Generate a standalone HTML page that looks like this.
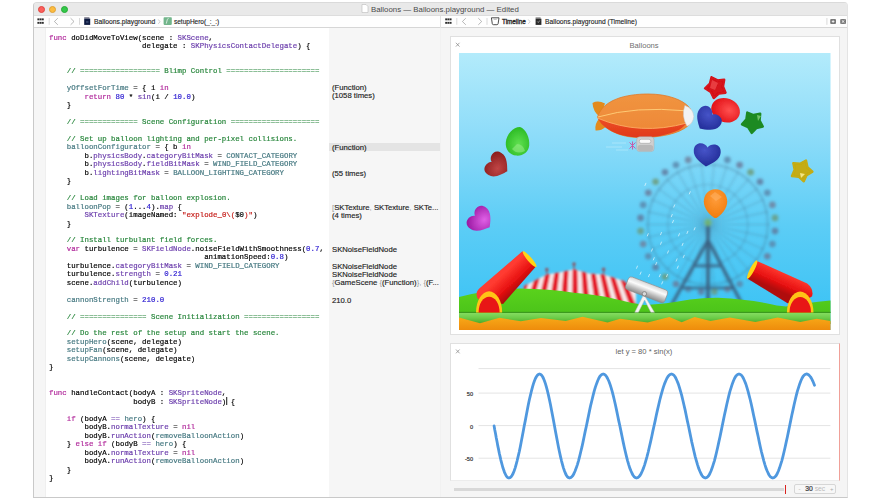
<!DOCTYPE html>
<html><head><meta charset="utf-8">
<style>
*{margin:0;padding:0;box-sizing:border-box}
html,body{width:880px;height:500px;overflow:hidden;background:#fff;font-family:"Liberation Sans",sans-serif;position:relative}
.a{position:absolute}
#win{position:absolute;left:33px;top:2px;width:815px;height:496px;border:1px solid #c9c9c9;border-right-color:#e4e4e4;border-top-color:#dadada;border-radius:4px 4px 0 0;background:#f1f1f1}
#title{position:absolute;left:34px;top:3px;width:813px;height:13px;background:#e9e9e9;border-bottom:1px solid #dddddd;border-radius:3px 3px 0 0}
#tool{position:absolute;left:34px;top:16px;width:813px;height:12px;background:#fefefe;border-bottom:1px solid #d6d6d6}
.light{position:absolute;top:5.6px;width:7.2px;height:7.2px;border-radius:50%}
#editor{position:absolute;left:34px;top:28px;width:406px;height:469px;background:#fff}
#gutter{position:absolute;left:34px;top:28px;width:12px;height:469px;background:#f6f6f6;border-right:1px solid #efefef}
#results{position:absolute;left:329px;top:28px;width:111px;height:469px;background:#f6f6f6}
#divider{position:absolute;left:440.5px;top:28px;width:1.2px;height:469px;background:#dcdcdc}
#right{position:absolute;left:441px;top:28px;width:406px;height:469px;background:#f5f5f5}
#code{position:absolute;left:49.3px;top:33.6px;font-family:"Liberation Mono",monospace;font-size:8px;line-height:8.45px;white-space:pre;color:#000;transform:scaleX(0.9233);transform-origin:0 0;-webkit-text-stroke:0.2px}
#code b{font-weight:normal}
.k{color:#b0289a}.t{color:#6a3cab}.p{color:#457880}.c{color:#26853a}.n{color:#2a1ad0}.s{color:#c41a16}
.cur{display:inline-block;width:1px;height:8px;background:#000;vertical-align:-1px;margin-right:-1px}
.res{position:absolute;left:332px;font-size:7.7px;color:#222;white-space:pre;line-height:8px;-webkit-text-stroke:0.15px #222}
.res i{-webkit-text-stroke:0}
.res i{font-style:normal;color:#999}
.panel{position:absolute;background:#fff;border:1px solid #e0e0e0}
.tb{position:absolute;font-size:6.7px;color:#222;white-space:pre;line-height:8px;-webkit-text-stroke:0.12px #222}
</style></head><body>
<div id="win"></div>
<div id="title">
  <div class="light" style="left:3.8px;top:2.6px;background:#fc605c;border:0.5px solid #e0443e"></div>
  <div class="light" style="left:15px;top:2.6px;background:#fdbc40;border:0.5px solid #dea236"></div>
  <div class="light" style="left:26.6px;top:2.6px;background:#34c84a;border:0.5px solid #27aa35"></div>
</div>
<svg class="a" style="left:361px;top:4px" width="8" height="9"><path d="M1 .5h4l2 2v6H1z" fill="#fff" stroke="#bbb" stroke-width=".6"/></svg>
<div class="a" style="left:371px;top:4.5px;font-size:7.85px;color:#4a4a4a;white-space:pre;line-height:9px">Balloons — Balloons.playground — Edited</div>
<div id="tool"></div>
<svg class="a" style="left:34px;top:16px" width="813" height="12" viewBox="34 16 813 12">
  <g fill="#2e2e2e"><rect x="37.4" y="18.4" width="1.95" height="1.9"/><rect x="39.6" y="18.4" width="1.95" height="1.9"/><rect x="41.8" y="18.4" width="1.95" height="1.9"/><rect x="37.4" y="21.9" width="1.95" height="1.9"/><rect x="39.6" y="21.9" width="1.95" height="1.9"/><rect x="41.8" y="21.9" width="1.95" height="1.9"/><rect x="445.2" y="18.4" width="1.95" height="1.9"/><rect x="447.4" y="18.4" width="1.95" height="1.9"/><rect x="449.6" y="18.4" width="1.95" height="1.9"/><rect x="445.2" y="21.9" width="1.95" height="1.9"/><rect x="447.4" y="21.9" width="1.95" height="1.9"/><rect x="449.6" y="21.9" width="1.95" height="1.9"/></g>
  <g fill="#d9d9d9">
    <rect x="48.7" y="18" width="1" height="6.8"/><rect x="79" y="18" width="1" height="6.8"/>
    <rect x="456.3" y="18" width="1" height="6.8"/><rect x="486.5" y="18" width="1" height="6.8"/>
    <rect x="826.4" y="18" width="1" height="6.8"/>
  </g>
  <g fill="none" stroke="#9a9a9a" stroke-width=".7">
    <path d="M57.8 18.2 L54.4 21.5 L57.8 24.8"/><path d="M70.6 18.2 L74 21.5 L70.6 24.8"/>
    <path d="M465.8 18.2 L462.4 21.5 L465.8 24.8"/><path d="M478.3 18.2 L481.7 21.5 L478.3 24.8"/>
  </g>
  <g fill="none" stroke="#b0b0b0" stroke-width=".6">
    <path d="M158.3 19.5 L160 21.7 L158.3 23.9"/><path d="M528.3 19.5 L530 21.7 L528.3 23.9"/>
  </g>
  <!-- doc icons -->
  <rect x="84.2" y="17.1" width="5.2" height="1.6" fill="#8a8a9a"/>
  <rect x="84.2" y="18.6" width="6" height="6.3" fill="#0d1a40"/>
  <path d="M86 21.5h2.5M86 22.6h2.5" stroke="#5a6a90" stroke-width=".5"/>
  <rect x="535.6" y="17.3" width="5" height="1.5" fill="#8a8a8a"/>
  <rect x="535.6" y="18.7" width="5.8" height="6.2" fill="#2a2a2a"/>
  <path d="M537.3 21.5l1 1 1.5-2" stroke="#ddd" stroke-width=".6" fill="none"/>
  <!-- green func icon -->
  <rect x="163.6" y="17.2" width="8.2" height="7.7" rx=".8" fill="#72b58b"/>
  <path d="M168.6 18.6 Q167.6 18.4 167.3 19.6 L166.3 23.6" stroke="#fff" stroke-width=".7" fill="none"/>
  <!-- timeline icon -->
  <path d="M491.4 17.8 h7.6 l-0.9 6 q-0.2 .9 -1.2 .9 h-3.4 q-1 0 -1.2 -.9z" fill="#fff" stroke="#3a3a3a" stroke-width=".9"/>
  <path d="M493.6 19.3h3.2" stroke="#777" stroke-width=".5"/>
  <!-- right icons -->
  <rect x="830.2" y="18.9" width="5.8" height="5.2" rx="1" fill="#7a7a7a"/>
  <path d="M831.8 21.5h2.6M833.1 20.2v2.6" stroke="#f4f4f4" stroke-width=".9"/>
  <rect x="840.2" y="18.9" width="5.8" height="5.2" rx="1" fill="#7a7a7a"/>
  <path d="M841.8 20.3l2.6 2.4M844.4 20.3l-2.6 2.4" stroke="#f4f4f4" stroke-width=".9"/>
</svg>
<div class="tb" style="left:94px;top:17.6px;font-size:6.75px">Balloons.playground</div>
<div class="tb" style="left:174px;top:17.6px;font-size:6.5px">setupHero(_:_:)</div>
<div class="tb" style="left:502px;top:17.6px;font-size:6.35px;color:#222;-webkit-text-stroke:0.3px #222">Timeline</div>
<div class="tb" style="left:545px;top:17.6px;font-size:6.7px">Balloons.playground (Timeline)</div>
<div class="a" style="left:440px;top:16px;width:1px;height:12px;background:#e2e2e2"></div>

<div id="editor"></div>
<div id="gutter"></div>
<div id="results"></div>
<div class="a" style="left:329px;top:143px;width:111px;height:8.2px;background:#e4e4e4"></div>
<div class="res" style="top:84.3px">(Function)
(1058 times)</div>
<div class="res" style="top:143.5px">(Function)</div>
<div class="res" style="top:169.5px">(55 times)</div>
<div class="res" style="top:203.5px"><i>[</i>SKTexture<i>,</i> SKTexture<i>,</i> SKTe...
(4 times)</div>
<div class="res" style="top:246px">SKNoiseFieldNode</div>
<div class="res" style="top:263px">SKNoiseFieldNode
SKNoiseFieldNode
<i>{</i>GameScene <i>{</i>(Function)<i>}, {</i>(F...</div>
<div class="res" style="top:296.5px">210.0</div>

<div id="code"><b class="k">func</b> doDidMoveToView(scene : <b class="t">SKScene</b>,
                     delegate : <b class="t">SKPhysicsContactDelegate</b>) {


    <b class="c">// ================== Blimp Control =====================</b>

    <b class="p">yOffsetForTime</b> = { i <b class="k">in</b>
        <b class="k">return</b> <b class="n">80</b> * <b class="t">sin</b>(i / <b class="n">10.0</b>)
    }

    <b class="c">// ============= Scene Configuration ====================</b>

    <b class="c">// Set up balloon lighting and per-pixel collisions.</b>
    <b class="p">balloonConfigurator</b> = { b <b class="k">in</b>
        b.<b class="t">physicsBody</b>.<b class="t">categoryBitMask</b> = <b class="p">CONTACT_CATEGORY</b>
        b.<b class="t">physicsBody</b>.<b class="t">fieldBitMask</b> = <b class="p">WIND_FIELD_CATEGORY</b>
        b.<b class="t">lightingBitMask</b> = <b class="p">BALLOON_LIGHTING_CATEGORY</b>
    }

    <b class="c">// Load images for balloon explosion.</b>
    <b class="p">balloonPop</b> = (<b class="n">1</b>...<b class="n">4</b>).<b class="t">map</b> {
        <b class="t">SKTexture</b>(imageNamed: <b class="s">&quot;explode_0\(</b>$0<b class="s">)&quot;</b>)
    }

    <b class="c">// Install turbulant field forces.</b>
    <b class="k">var</b> turbulence = <b class="t">SKFieldNode</b>.noiseFieldWithSmoothness(<b class="n">0.7</b>,
                                   animationSpeed:<b class="n">0.8</b>)
    turbulence.<b class="t">categoryBitMask</b> = <b class="p">WIND_FIELD_CATEGORY</b>
    turbulence.<b class="t">strength</b> = <b class="n">0.21</b>
    scene.<b class="t">addChild</b>(turbulence)

    <b class="p">cannonStrength</b> = <b class="n">210.0</b>

    <b class="c">// =============== Scene Initialization =================</b>

    <b class="c">// Do the rest of the setup and start the scene.</b>
    <b class="p">setupHero</b>(scene, delegate)
    <b class="p">setupFan</b>(scene, delegate)
    <b class="p">setupCannons</b>(scene, delegate)
}


<b class="k">func</b> handleContact(bodyA : <b class="t">SKSpriteNode</b>,
                   bodyB : <b class="t">SKSpriteNode</b>)<i class="cur"></i> {

    <b class="k">if</b> (bodyA <b class="t">==</b> <b class="p">hero</b>) {
        bodyB.<b class="t">normalTexture</b> = <b class="k">nil</b>
        bodyB.<b class="t">runAction</b>(<b class="p">removeBalloonAction</b>)
    } <b class="k">else</b> <b class="k">if</b> (bodyB <b class="t">==</b> <b class="p">hero</b>) {
        bodyA.<b class="t">normalTexture</b> = <b class="k">nil</b>
        bodyA.<b class="t">runAction</b>(<b class="p">removeBalloonAction</b>)
    }
}</div>
<div id="divider"></div>
<div id="right"></div>
<div class="panel" style="left:449.6px;top:35.8px;width:390px;height:298.8px"></div>
<svg class="a" style="left:453px;top:40px" width="10" height="10" viewBox="453 40 10 10"><path d="M455.9 42.8L459.5 46.6M459.5 42.8L455.9 46.6" stroke="#8a8a8a" stroke-width="0.75"/></svg>
<div class="a" style="left:629.5px;top:41.8px;font-size:7.6px;color:#6f6f6f;line-height:8px">Balloons</div>
<div class="panel" style="left:449.6px;top:342.7px;width:390px;height:138.3px;border-right:1px solid #f0a098;border-bottom-color:#ececec"></div>
<svg class="a" style="left:453px;top:347px" width="10" height="10" viewBox="453 347 10 10"><path d="M456 349.5L459.6 353.3M459.6 349.5L456 353.3" stroke="#8a8a8a" stroke-width="0.75"/></svg>
<div class="a" style="left:615.5px;top:347.8px;font-size:7.6px;color:#636363;line-height:8px;white-space:pre">let y = 80 * sin(x)</div>
<div class="a" style="left:440px;top:389.6px;width:33px;text-align:right;font-size:5.6px;color:#333;line-height:8px;-webkit-text-stroke:0.2px #333">50</div>
<div class="a" style="left:440px;top:422.6px;width:33px;text-align:right;font-size:5.6px;color:#333;line-height:8px;-webkit-text-stroke:0.2px #333">0</div>
<div class="a" style="left:440px;top:455.2px;width:33px;text-align:right;font-size:5.6px;color:#333;line-height:8px;-webkit-text-stroke:0.2px #333">-50</div>
<svg class="a" style="left:450px;top:343px" width="390" height="140" viewBox="450 343 390 140">
<g stroke="#e4e4e4" stroke-width="1"><path d="M478.5 368.6H830.4M478.5 393.1H830.4M478.5 425.6H830.4M478.5 458.2H830.4"/></g>
<path d="M494.1 426.0 L494.8 430.1 L495.6 434.1 L496.3 438.1 L497.1 442.1 L497.8 445.9 L498.6 449.6 L499.3 453.2 L500.1 456.6 L500.8 459.8 L501.6 462.8 L502.3 465.5 L503.0 468.1 L503.8 470.3 L504.5 472.3 L505.3 474.0 L506.0 475.5 L506.8 476.6 L507.5 477.4 L508.3 477.8 L509.0 478.0 L510.0 477.7 L511.0 476.9 L512.0 475.5 L513.1 473.5 L514.1 471.0 L515.1 468.1 L516.1 464.6 L517.1 460.8 L518.1 456.6 L519.2 452.0 L520.2 447.2 L521.2 442.1 L522.2 436.8 L523.2 431.4 L524.2 426.0 L525.3 420.6 L526.3 415.2 L527.3 409.9 L528.3 404.8 L529.3 400.0 L530.4 395.4 L531.4 391.2 L532.4 387.4 L533.4 383.9 L534.4 381.0 L535.4 378.5 L536.5 376.5 L537.5 375.1 L538.5 374.3 L539.5 374.0 L540.5 374.3 L541.5 375.1 L542.5 376.5 L543.5 378.5 L544.5 381.0 L545.5 383.9 L546.5 387.4 L547.5 391.2 L548.5 395.4 L549.5 400.0 L550.5 404.8 L551.5 409.9 L552.5 415.2 L553.5 420.6 L554.5 426.0 L555.5 431.4 L556.5 436.8 L557.5 442.1 L558.5 447.2 L559.5 452.0 L560.5 456.6 L561.5 460.8 L562.5 464.6 L563.5 468.1 L564.5 471.0 L565.5 473.5 L566.5 475.5 L567.5 476.9 L568.5 477.7 L569.5 478.0 L570.6 477.7 L571.7 476.9 L572.9 475.5 L574.0 473.5 L575.1 471.0 L576.2 468.1 L577.4 464.6 L578.5 460.8 L579.6 456.6 L580.7 452.0 L581.9 447.2 L583.0 442.1 L584.1 436.8 L585.2 431.4 L586.4 426.0 L587.5 420.6 L588.6 415.2 L589.7 409.9 L590.8 404.8 L592.0 400.0 L593.1 395.4 L594.2 391.2 L595.3 387.4 L596.5 383.9 L597.6 381.0 L598.7 378.5 L599.8 376.5 L601.0 375.1 L602.1 374.3 L603.2 374.0 L604.3 374.3 L605.4 375.1 L606.5 376.5 L607.6 378.5 L608.8 381.0 L609.9 383.9 L611.0 387.4 L612.1 391.2 L613.2 395.4 L614.3 400.0 L615.4 404.8 L616.5 409.9 L617.6 415.2 L618.7 420.6 L619.9 426.0 L621.0 431.4 L622.1 436.8 L623.2 442.1 L624.3 447.2 L625.4 452.0 L626.5 456.6 L627.6 460.8 L628.7 464.6 L629.8 468.1 L631.0 471.0 L632.1 473.5 L633.2 475.5 L634.3 476.9 L635.4 477.7 L636.5 478.0 L637.7 477.7 L638.8 476.9 L640.0 475.5 L641.2 473.5 L642.3 471.0 L643.5 468.1 L644.7 464.6 L645.8 460.8 L647.0 456.6 L648.2 452.0 L649.3 447.2 L650.5 442.1 L651.7 436.8 L652.8 431.4 L654.0 426.0 L655.2 420.6 L656.3 415.2 L657.5 409.9 L658.7 404.8 L659.8 400.0 L661.0 395.4 L662.2 391.2 L663.3 387.4 L664.5 383.9 L665.7 381.0 L666.8 378.5 L668.0 376.5 L669.2 375.1 L670.3 374.3 L671.5 374.0 L672.6 374.3 L673.8 375.1 L674.9 376.5 L676.0 378.5 L677.1 381.0 L678.3 383.9 L679.4 387.4 L680.5 391.2 L681.7 395.4 L682.8 400.0 L683.9 404.8 L685.1 409.9 L686.2 415.2 L687.3 420.6 L688.5 426.0 L689.6 431.4 L690.7 436.8 L691.8 442.1 L693.0 447.2 L694.1 452.0 L695.2 456.6 L696.4 460.8 L697.5 464.6 L698.6 468.1 L699.8 471.0 L700.9 473.5 L702.0 475.5 L703.1 476.9 L704.3 477.7 L705.4 478.0 L706.5 477.7 L707.6 476.9 L708.8 475.5 L709.9 473.5 L711.0 471.0 L712.1 468.1 L713.2 464.6 L714.4 460.8 L715.5 456.6 L716.6 452.0 L717.7 447.2 L718.8 442.1 L720.0 436.8 L721.1 431.4 L722.2 426.0 L723.3 420.6 L724.4 415.2 L725.6 409.9 L726.7 404.8 L727.8 400.0 L728.9 395.4 L730.0 391.2 L731.2 387.4 L732.3 383.9 L733.4 381.0 L734.5 378.5 L735.6 376.5 L736.8 375.1 L737.9 374.3 L739.0 374.0 L740.1 374.3 L741.3 375.1 L742.4 376.5 L743.5 378.5 L744.6 381.0 L745.8 383.9 L746.9 387.4 L748.0 391.2 L749.1 395.4 L750.3 400.0 L751.4 404.8 L752.5 409.9 L753.6 415.2 L754.8 420.6 L755.9 426.0 L757.0 431.4 L758.2 436.8 L759.3 442.1 L760.4 447.2 L761.5 452.0 L762.7 456.6 L763.8 460.8 L764.9 464.6 L766.0 468.1 L767.2 471.0 L768.3 473.5 L769.4 475.5 L770.5 476.9 L771.7 477.7 L772.8 478.0 L773.9 477.7 L775.0 476.9 L776.2 475.5 L777.3 473.5 L778.4 471.0 L779.5 468.1 L780.6 464.6 L781.8 460.8 L782.9 456.6 L784.0 452.0 L785.1 447.2 L786.2 442.1 L787.4 436.8 L788.5 431.4 L789.6 426.0 L790.7 420.6 L791.8 415.2 L793.0 409.9 L794.1 404.8 L795.2 400.0 L796.3 395.4 L797.4 391.2 L798.6 387.4 L799.7 383.9 L800.8 381.0 L801.9 378.5 L803.0 376.5 L804.2 375.1 L805.3 374.3 L806.4 374.0 L807.2 374.1 L808.0 374.5 L808.8 375.0 L809.6 375.9 L810.5 376.9 L811.3 378.1 L812.1 379.6 L812.9 381.3 L813.7 383.2 L814.5 385.2" fill="none" stroke="#4f98df" stroke-width="2.8" stroke-linejoin="round" stroke-linecap="round"/>
</svg>
<div class="a" style="left:454px;top:488px;width:330px;height:2.5px;background:#d8d8d8"></div>
<div class="a" style="left:784.5px;top:485px;width:1.6px;height:8.5px;background:#d9231f"></div>
<div class="a" style="left:794px;top:484px;width:42px;height:10px;border:1px solid #d6d6d6;border-radius:2px;background:#f7f7f7"></div>
<div class="a" style="left:798.5px;top:485px;font-size:6px;color:#aaa;line-height:8px">-</div>
<div class="a" style="left:805.2px;top:485.2px;font-size:6.8px;color:#3a3a3a;line-height:8px;white-space:pre;-webkit-text-stroke:0.2px #3a3a3a">30 <span style="color:#bbb;-webkit-text-stroke:0">sec</span></div>
<div class="a" style="left:830px;top:485px;font-size:6px;color:#aaa;line-height:8px">+</div>
<svg class="a" style="left:459px;top:53px" width="371.5" height="277" viewBox="459 53 371.5 277">
<defs>
  <linearGradient id="sky" x1="0" y1="0" x2="0" y2="1">
    <stop offset="0" stop-color="#b3ebfb"/>
    <stop offset="0.3" stop-color="#8ddcf9"/>
    <stop offset="0.62" stop-color="#5ccdf6"/>
    <stop offset="1" stop-color="#36c1f4"/>
  </linearGradient>
  <filter id="blur2" x="-20%" y="-20%" width="140%" height="140%"><feGaussianBlur stdDeviation="1.5"/></filter>
  <filter id="blur1" x="-20%" y="-20%" width="140%" height="140%"><feGaussianBlur stdDeviation="0.9"/></filter>
  <filter id="soft" x="-20%" y="-20%" width="140%" height="140%"><feGaussianBlur stdDeviation="0.4"/></filter>
  <linearGradient id="hill" x1="0" y1="0" x2="0" y2="1">
    <stop offset="0" stop-color="#5ad21c"/>
    <stop offset="1" stop-color="#4cc41a"/>
  </linearGradient>
  <linearGradient id="orange" x1="0" y1="0" x2="0" y2="1">
    <stop offset="0" stop-color="#f8aa18"/>
    <stop offset="1" stop-color="#ee8c0c"/>
  </linearGradient>
  <linearGradient id="barL" gradientUnits="userSpaceOnUse" x1="512" y1="266" x2="526" y2="281">
    <stop offset="0" stop-color="#ff3a30"/><stop offset="0.6" stop-color="#e81212"/><stop offset="1" stop-color="#b00a0a"/>
  </linearGradient>
  <linearGradient id="barR" gradientUnits="userSpaceOnUse" x1="780" y1="270" x2="772" y2="288">
    <stop offset="0" stop-color="#ff3a30"/><stop offset="0.6" stop-color="#e81212"/><stop offset="1" stop-color="#b00a0a"/>
  </linearGradient>
  <linearGradient id="silver" x1="0" y1="0" x2="0" y2="1">
    <stop offset="0" stop-color="#d6d6d6"/>
    <stop offset="0.35" stop-color="#fbfbfb"/>
    <stop offset="0.7" stop-color="#bcbcbc"/>
    <stop offset="1" stop-color="#8c8c8c"/>
  </linearGradient>
  <linearGradient id="blimpTop" x1="0" y1="0" x2="0" y2="1">
    <stop offset="0" stop-color="#f09440"/><stop offset="1" stop-color="#ee8636"/>
  </linearGradient>
  <linearGradient id="blimpBot" x1="0" y1="0" x2="0" y2="1">
    <stop offset="0" stop-color="#ec4e24"/><stop offset="1" stop-color="#e0381a"/>
  </linearGradient>
  <radialGradient id="balR" cx="0.62" cy="0.45" r="0.65"><stop offset="0" stop-color="#ff5050"/><stop offset="1" stop-color="#e00c12"/></radialGradient>
  <radialGradient id="balG" cx="0.55" cy="0.6" r="0.7"><stop offset="0" stop-color="#60e050"/><stop offset="1" stop-color="#22b41c"/></radialGradient>
  <radialGradient id="balO" cx="0.5" cy="0.35" r="0.7"><stop offset="0" stop-color="#ff9c3a"/><stop offset="1" stop-color="#f07a0a"/></radialGradient>
  <radialGradient id="balB" cx="0.4" cy="0.3" r="0.8"><stop offset="0" stop-color="#4654c8"/><stop offset="1" stop-color="#1c2690"/></radialGradient>
  <radialGradient id="balDR" cx="0.4" cy="0.55" r="0.75"><stop offset="0" stop-color="#c04646"/><stop offset="1" stop-color="#861818"/></radialGradient>
  <radialGradient id="balM" cx="0.6" cy="0.6" r="0.7"><stop offset="0" stop-color="#e060e6"/><stop offset="1" stop-color="#9c1aa4"/></radialGradient>
  <clipPath id="tentclip"><path d="M523.9 286 L546.8 274.4 L559 272.5 L574 269.2 L589 273.6 L603.6 274.4 L624 281 L636 291 L636 312 L523.9 312Z"/></clipPath>
</defs>
<rect x="459" y="53" width="371.5" height="277" fill="url(#sky)"/>
<g filter="url(#blur2)"><g fill="none" stroke="#3f6d8c" stroke-opacity="0.35"><circle cx="707.8" cy="224.5" r="60" stroke-width="2"/><circle cx="707.8" cy="224.5" r="40" stroke-width="1.2"/><path d="M707.8 224.5L769.8 224.5M707.8 224.5L768.4 237.4M707.8 224.5L764.4 249.7M707.8 224.5L758.0 260.9M707.8 224.5L749.3 270.6M707.8 224.5L738.8 278.2M707.8 224.5L727.0 283.5M707.8 224.5L714.3 286.2M707.8 224.5L701.3 286.2M707.8 224.5L688.6 283.5M707.8 224.5L676.8 278.2M707.8 224.5L666.3 270.6M707.8 224.5L657.6 260.9M707.8 224.5L651.2 249.7M707.8 224.5L647.2 237.4M707.8 224.5L645.8 224.5M707.8 224.5L647.2 211.6M707.8 224.5L651.2 199.3M707.8 224.5L657.6 188.1M707.8 224.5L666.3 178.4M707.8 224.5L676.8 170.8M707.8 224.5L688.6 165.5M707.8 224.5L701.3 162.8M707.8 224.5L714.3 162.8M707.8 224.5L727.0 165.5M707.8 224.5L738.8 170.8M707.8 224.5L749.3 178.4M707.8 224.5L758.0 188.1M707.8 224.5L764.4 199.3M707.8 224.5L768.4 211.6" stroke-width="1.1"/></g><circle cx="714.4" cy="157.3" r="3.3" fill="#5f7a9e" opacity="0.85"/><circle cx="727.4" cy="159.9" r="3.3" fill="#5a86aa" opacity="0.85"/><circle cx="739.6" cy="165.0" r="3.3" fill="#6a7a9a" opacity="0.85"/><circle cx="750.6" cy="172.3" r="3.3" fill="#6c9a78" opacity="0.85"/><circle cx="760.0" cy="181.7" r="3.3" fill="#5f7a9e" opacity="0.85"/><circle cx="767.3" cy="192.7" r="3.3" fill="#5a86aa" opacity="0.85"/><circle cx="772.4" cy="204.9" r="3.3" fill="#70809c" opacity="0.85"/><circle cx="775.0" cy="217.9" r="3.3" fill="#6a9c80" opacity="0.85"/><circle cx="775.0" cy="231.1" r="3.3" fill="#5f7a9e" opacity="0.85"/><circle cx="772.4" cy="244.1" r="3.3" fill="#5a86aa" opacity="0.85"/><circle cx="767.3" cy="256.3" r="3.3" fill="#6a7a9a" opacity="0.85"/><circle cx="760.0" cy="267.3" r="3.3" fill="#6c9a78" opacity="0.85"/><circle cx="750.6" cy="276.7" r="3.3" fill="#5f7a9e" opacity="0.85"/><circle cx="739.6" cy="284.0" r="3.3" fill="#5a86aa" opacity="0.85"/><circle cx="727.4" cy="289.1" r="3.3" fill="#70809c" opacity="0.85"/><circle cx="714.4" cy="291.7" r="3.3" fill="#6a9c80" opacity="0.85"/><circle cx="701.2" cy="291.7" r="3.3" fill="#5f7a9e" opacity="0.85"/><circle cx="688.2" cy="289.1" r="3.3" fill="#5a86aa" opacity="0.85"/><circle cx="676.0" cy="284.0" r="3.3" fill="#6a7a9a" opacity="0.85"/><circle cx="665.0" cy="276.7" r="3.3" fill="#6c9a78" opacity="0.85"/><circle cx="655.6" cy="267.3" r="3.3" fill="#5f7a9e" opacity="0.85"/><circle cx="648.3" cy="256.3" r="3.3" fill="#5a86aa" opacity="0.85"/><circle cx="643.2" cy="244.1" r="3.3" fill="#70809c" opacity="0.85"/><circle cx="640.6" cy="231.1" r="3.3" fill="#6a9c80" opacity="0.85"/><circle cx="640.6" cy="217.9" r="3.3" fill="#5f7a9e" opacity="0.85"/><circle cx="643.2" cy="204.9" r="3.3" fill="#5a86aa" opacity="0.85"/><circle cx="648.3" cy="192.7" r="3.3" fill="#6a7a9a" opacity="0.85"/><circle cx="655.6" cy="181.7" r="3.3" fill="#6c9a78" opacity="0.85"/><circle cx="665.0" cy="172.3" r="3.3" fill="#5f7a9e" opacity="0.85"/><circle cx="676.0" cy="165.0" r="3.3" fill="#5a86aa" opacity="0.85"/><circle cx="688.2" cy="159.9" r="3.3" fill="#70809c" opacity="0.85"/><circle cx="701.2" cy="157.3" r="3.3" fill="#6a9c80" opacity="0.85"/><g stroke="#3a5f80" stroke-opacity="0.9" fill="none" stroke-linecap="round"><path d="M707 242 L672 304 M709 242 L742 304" stroke-width="3.4"/><path d="M708 222 V304" stroke-width="3.8"/><path d="M683 288 H733 M696 266 H720" stroke-width="2.4"/></g><circle cx="708" cy="222.5" r="3.5" fill="#7cc070" opacity="0.8"/></g>
<g filter="url(#blur1)"><path d="M523.9 286 L546.8 274.4 L559 272.5 L574 269.2 L589 273.6 L603.6 274.4 L624 281 L636 291 L636 312 L523.9 312Z" fill="#f6e8ea"/><g clip-path="url(#tentclip)"><path d="M512.0 312 L518.6 312 L535.2 264 L530.6 264Z" fill="#e41c2a"/><path d="M524.0 312 L530.6 312 L543.6 264 L539.0 264Z" fill="#e41c2a"/><path d="M536.0 312 L542.6 312 L552.0 264 L547.4 264Z" fill="#e41c2a"/><path d="M548.0 312 L554.6 312 L560.4 264 L555.8 264Z" fill="#e41c2a"/><path d="M560.0 312 L566.6 312 L568.8 264 L564.2 264Z" fill="#e41c2a"/><path d="M572.0 312 L578.6 312 L577.2 264 L572.6 264Z" fill="#e41c2a"/><path d="M584.0 312 L590.6 312 L585.6 264 L581.0 264Z" fill="#e41c2a"/><path d="M596.0 312 L602.6 312 L594.0 264 L589.4 264Z" fill="#e41c2a"/><path d="M608.0 312 L614.6 312 L602.4 264 L597.8 264Z" fill="#e41c2a"/><path d="M620.0 312 L626.6 312 L610.8 264 L606.2 264Z" fill="#e41c2a"/><path d="M632.0 312 L638.6 312 L619.2 264 L614.6 264Z" fill="#e41c2a"/></g><path d="M546.8 274 v-5 M574 269 v-5 M603.6 274 v-5" stroke="#7a4a5a" stroke-width="1.2"/><circle cx="546.8" cy="269.5" r="1.8" fill="#8a5a6a"/><circle cx="574" cy="264" r="1.8" fill="#8a5a6a"/><circle cx="603.6" cy="269.2" r="1.8" fill="#8a5a6a"/></g>
<path d="M459 297 Q485 290 520 288.5 Q550 289 574 292.8 Q600 295 615 299 Q630 303 645 305 Q665 304 690 299.5 Q705 297.5 718 297.7 Q745 299 765 303 Q778 306 786 306.5 Q805 303 830.5 300.5 V313 H459Z" fill="url(#hill)"/>
<rect x="459" y="311.8" width="371.5" height="1.2" fill="#3c9a1e"/>
<defs><linearGradient id="band" x1="0" y1="0" x2="0" y2="1"><stop offset="0" stop-color="#84dc60"/><stop offset="0.45" stop-color="#6ccc48"/><stop offset="1" stop-color="#46a426"/></linearGradient></defs>
<rect x="459" y="313" width="371.5" height="11" fill="url(#band)"/>
<path d="M459 330 L459.0 317.5 L480.0 323.2 L499.4 317.7 L520.8 321.3 L541.0 317.9 L565.7 321.0 L582.5 316.7 L607.5 322.6 L620.2 318.8 L647.6 322.5 L669.4 316.9 L681.7 322.2 L694.6 316.9 L710.5 320.9 L729.9 317.5 L755.4 322.1 L777.7 317.6 L800.3 322.0 L816.7 318.8 L830.5 321.0 L830.5 330Z" fill="url(#orange)"/>
<path d="M644.8 185.9l1.2 -3M689.2 194.3l1.2 -3M673.6 207.5l1.2 -3M671.2 217.1l1.2 -3M672.4 223.1l1.2 -3M647.2 236.3l1.2 -3M660.4 235.1l1.2 -3M678.4 236.3l1.2 -3M686.8 233.9l1.2 -3M694.0 230.3l1.2 -3M660.4 244.7l1.2 -3M682.0 245.9l1.2 -3M653.2 260.3l1.2 -3M676.0 261.5l1.2 -3M683.2 257.9l1.2 -3M655.6 265.1l1.2 -3M636.4 268.7l1.2 -3M640.0 274.7l1.2 -3M648.4 277.1l1.2 -3M659.2 277.1l1.2 -3M666.4 277.1l1.2 -3M677.2 268.7l1.2 -3M661.6 284.3l1.2 -3M651.4 251.5l1.2 -3M667.4 253.5l1.2 -3" stroke="#f4fcff" stroke-width="0.9" opacity="0.75" filter="url(#soft)"/>
<g filter="url(#soft)">
<path d="M522.4 251.3 L535.7 266.7 L503 304 L478 299 Q474 292 481 287Z" fill="url(#barL)"/>
<ellipse cx="529.6" cy="259.2" rx="2.2" ry="10.2" transform="rotate(-41 529.6 259.2)" fill="#ffd418"/>

<path d="M476 312.5 A13 21 0 0 1 502.2 312.5Z" fill="#ffc418"/>
<path d="M478.6 312.5 A10.5 15.8 0 0 1 499.6 312.5Z" fill="#e81414"/>
</g>
<g filter="url(#soft)">
<path d="M757.5 261.2 L807.2 283.6 Q814 289 812.1 296.2 L800 304 L787.6 303.2 L747.7 278.7Z" fill="url(#barR)"/>
<ellipse cx="752.2" cy="269.5" rx="2.2" ry="10.3" transform="rotate(28 752.2 269.5)" fill="#ffd418"/>

<path d="M786.9 312.5 A13.3 21 0 0 1 813.5 312.5Z" fill="#ffc418"/>
<path d="M789.5 312.5 A10.75 15.6 0 0 1 811 312.5Z" fill="#e81414"/>
</g>
<g filter="url(#soft)">
<path d="M643.8 294.2 L634.8 312.3 L638.4 312.3 L644.6 300 L650.8 312.3 L654.4 312.3Z" fill="#f4f4f4" stroke="#b8b8b8" stroke-width="0.5"/>
<g transform="rotate(21 646.5 290)"><rect x="625.5" y="283" width="42" height="13.6" rx="3.2" fill="url(#silver)" stroke="#8a8a8a" stroke-width="0.6"/></g>
<circle cx="644.4" cy="293.8" r="2.2" fill="#d8d8d8" stroke="#7a7a7a" stroke-width="0.8"/>
</g>
<g filter="url(#soft)">
<path d="M592.5 103 Q598 100 605 103.5 Q603 110 600 117 Q593 112 592.5 103Z" fill="#e38a1a"/>
<path d="M595.5 130.5 Q594.5 123 600 118 Q604 122 605.5 127 Q601 131 595.5 130.5Z" fill="#e38a1a"/>
<path d="M597.5 117 C603 100 625 94 648 94 C668 94 682 100 688 106 C694 112 694 121 688 126 C678 134 660 137.5 640 137.5 C618 137.5 602 128 597.5 117Z" fill="url(#blimpTop)" stroke="#e07a2a" stroke-width="0.8"/>
<path d="M597.9 118.3 Q640 136 687 123 C684 126 682 128 679 130 C668 135 655 137.5 640 137.5 C618 137.5 602 128 597.9 118.3Z" fill="url(#blimpBot)"/>
<path d="M597.9 117 Q635 106 686 110.8" fill="none" stroke="#ffd07a" stroke-width="0.9"/>
<path d="M597.9 118.3 Q640 136 687 123" fill="none" stroke="#ffb46a" stroke-width="0.8"/>
<path d="M684.9 105.4 Q693 108 693.8 116.5 Q693 124 687 126.2 Q681 116 684.9 105.4Z" fill="#f2f2f2" stroke="#c8c8c8" stroke-width="0.5"/>
<rect x="636.7" y="136.8" width="17.3" height="14.8" rx="3" fill="#cfcfcf" stroke="#a8a8a8" stroke-width="0.5"/><rect x="637.5" y="145" width="15.7" height="6" rx="2.5" fill="#b8b8b8"/>
<rect x="639.3" y="139.3" width="11.5" height="4" rx="1.8" fill="#fafafa" stroke="#999" stroke-width="0.5"/>
<path d="M629.5 142.5 L635.5 148.5 M629.5 148.5 L635.5 142.5 M632.5 141.5 V149.5" stroke="#c85aa8" stroke-width="1"/>
<path d="M612 143 H626 M606 147 H622 M616 150 H628" stroke="#e0f6fd" stroke-width=".6" opacity=".6"/>
</g>
<g filter="url(#soft)"><path d="M520 127 C526 129 530 138 529.2 145.5 C528.5 152 523 156 516.5 155.6 C509.5 155.2 505.3 149.5 505.8 142.5 C506.5 134.5 513 127 520 127Z" fill="url(#balG)"/><path d="M512 149 Q517 155 525 151 Q523 144 517 144Z" fill="#a0f090" opacity=".5"/><path d="M0 -6.5 C-2.5 -11.5 -13.5 -12.5 -13.5 -2.5 C-13.5 5 -5 9.5 0 12.5 C5 9.5 13.5 5 13.5 -2.5 C13.5 -12.5 2.5 -11.5 0 -6.5Z" transform="translate(497 165.2) rotate(-60) scale(0.95)" fill="url(#balDR)"/><path d="M0 -6.5 C-2.5 -11.5 -13.5 -12.5 -13.5 -2.5 C-13.5 5 -5 9.5 0 12.5 C5 9.5 13.5 5 13.5 -2.5 C13.5 -12.5 2.5 -11.5 0 -6.5Z" transform="translate(480 219.7) rotate(-52) scale(0.98)" fill="url(#balM)"/><path d="M715.5 189.2 C723 189.2 727.2 195 727.2 201.5 C727.2 209 721 215 716.5 218 L714.5 218 C710 215 703.8 209 703.8 201.5 C703.8 195 708 189.2 715.5 189.2Z" fill="url(#balO)"/><path d="M710 196 L715 192 L722 197 L716 201Z" fill="#ffb870" opacity=".45"/><path d="M711.5,77.2 L717.5,80.4 L724.2,79.8 L723.0,86.5 L725.5,92.7 L718.8,93.6 L713.7,98.0 L710.8,91.9 L705.1,88.3 L709.9,83.7Z" fill="#d5121a" stroke="#d5121a" stroke-width="2.4" stroke-linejoin="round"/><path d="M712 80 L718 83 L715 90 L710 88Z" fill="#ff7070" opacity=".45"/><ellipse cx="725.6" cy="110.2" rx="14.6" ry="11.9" transform="rotate(20 725.6 110.2)" fill="url(#balR)"/><path d="M0 -6.5 C-2.5 -11.5 -13.5 -12.5 -13.5 -2.5 C-13.5 5 -5 9.5 0 12.5 C5 9.5 13.5 5 13.5 -2.5 C13.5 -12.5 2.5 -11.5 0 -6.5Z" transform="translate(708 119.3) rotate(42) scale(0.98)" fill="url(#balB)"/><path d="M0 -6.5 C-2.5 -11.5 -13.5 -12.5 -13.5 -2.5 C-13.5 5 -5 9.5 0 12.5 C5 9.5 13.5 5 13.5 -2.5 C13.5 -12.5 2.5 -11.5 0 -6.5Z" transform="translate(707 154) rotate(5) scale(1.0)" fill="url(#balB)"/><path d="M747.3,112.5 L753.5,115.0 L760.2,113.8 L759.6,120.5 L762.8,126.5 L756.3,128.1 L751.7,132.9 L748.1,127.2 L742.0,124.3 L746.4,119.2Z" fill="#1d8a22" stroke="#1d8a22" stroke-width="2.4" stroke-linejoin="round"/><path d="M757 115 L761 116 L758 121Z" fill="#a8e898" opacity=".6"/><path d="M806.0,160.5 L807.4,167.1 L812.4,171.6 L806.6,175.1 L803.8,181.3 L798.7,176.7 L792.0,176.0 L794.7,169.8 L793.3,163.1 L800.1,163.8Z" fill="#c4ac12" stroke="#c4ac12" stroke-width="2.4" stroke-linejoin="round"/><path d="M800 173 L805 174 L801 178Z" fill="#fff3a0" opacity=".8"/></g>
</svg>
</body></html>
